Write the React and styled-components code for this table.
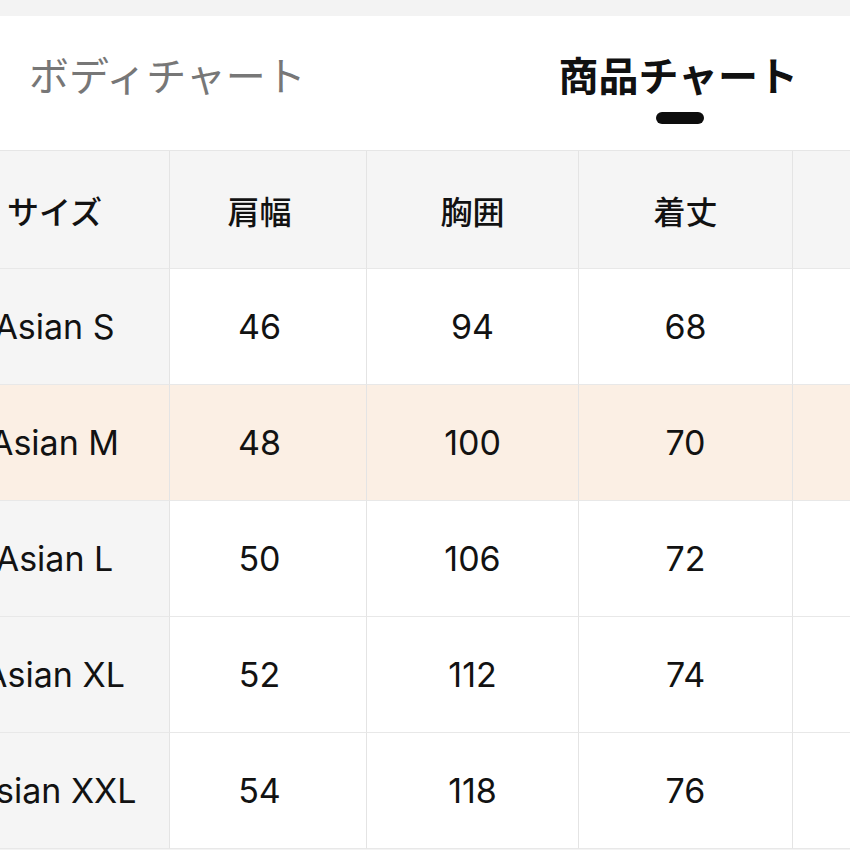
import React from "react";
import styled, { createGlobalStyle } from "styled-components";

const GlobalStyle = createGlobalStyle`
  html, body { margin: 0; padding: 0; background: #f3f3f3; }
  body { font-family: Inter, "Noto Sans CJK JP", sans-serif; }
  * { box-sizing: border-box; }
`;

const Page = styled.div`
  width: 850px;
  height: 850px;
  overflow: hidden;
  background: #f3f3f3;
  padding-top: 16px;
`;

const Header = styled.div`
  height: 135px;
  background: #fff;
  border-bottom: 1px solid #e6e6e6;
  box-shadow: 0 1px 2px rgba(0, 0, 0, 0.04);
  display: flex;
  justify-content: space-between;
  align-items: flex-start;
  padding: 0 52px 0 29px;
`;

const Tab = styled.div`
  display: flex;
  flex-direction: column;
  align-items: center;
  padding-top: 38px;
`;

const TabLabel = styled.span`
  font-family: "Noto Sans CJK JP", sans-serif;
  font-size: 40px;
  line-height: 1;
  font-weight: ${(p) => (p.$active ? 700 : 400)};
  color: ${(p) => (p.$active ? "#111111" : "#777777")};
`;

const Indicator = styled.div`
  width: 48px;
  height: 12px;
  margin-top: 18px;
  margin-left: 4px;
  border-radius: 6px;
  background: #0d0d0d;
`;

const TableWrap = styled.div`
  margin-left: -60px;
  background: #fff;
`;

const Row = styled.div`
  display: grid;
  grid-template-columns: 230px 197px 212px 214px 200px;
  height: ${(p) => (p.$head ? 118 : 116)}px;
  background: ${(p) => (p.$head ? "#f5f5f5" : p.$highlight ? "#fbefe4" : "#ffffff")};
`;

const Cell = styled.div`
  display: flex;
  align-items: center;
  justify-content: center;
  padding-right: ${(p) => (p.$shift ? 17 : 0)}px;
  border-right: 1px solid #e4e4e4;
  border-bottom: 1px solid #e8e8e8;
  background: ${(p) => (p.$first && !p.$highlight ? "#f5f5f5" : "transparent")};
  font-family: ${(p) =>
    p.$cjk ? `"Noto Sans CJK JP", sans-serif` : `Inter, "Noto Sans CJK JP", sans-serif`};
  font-size: ${(p) => (p.$cjk ? 32 : 34)}px;
  font-weight: ${(p) => (p.$cjk ? 500 : 400)};
  color: #121212;
  white-space: nowrap;
`;

const headers = ["サイズ", "肩幅", "胸囲", "着丈", ""];
const rows = [
  ["Asian S", "46", "94", "68"],
  ["Asian M", "48", "100", "70"],
  ["Asian L", "50", "106", "72"],
  ["Asian XL", "52", "112", "74"],
  ["Asian XXL", "54", "118", "76"],
];

export default function App() {
  return (
    <>
      <GlobalStyle />
      <Page>
        <Header>
          <Tab>
            <TabLabel>ボディチャート</TabLabel>
          </Tab>
          <Tab>
            <TabLabel $active>商品チャート</TabLabel>
            <Indicator />
          </Tab>
        </Header>
        <TableWrap>
          <Row $head>
            {headers.map((h, i) => (
              <Cell key={i} $cjk $first={i === 0} $shift={i === 1}>
                {h}
              </Cell>
            ))}
          </Row>
          {rows.map((r, ri) => (
            <Row key={ri} $highlight={ri === 1}>
              {[...r, ""].map((c, ci) => (
                <Cell key={ci} $first={ci === 0} $shift={ci === 1} $highlight={ri === 1}>
                  {c}
                </Cell>
              ))}
            </Row>
          ))}
        </TableWrap>
      </Page>
    </>
  );
}
